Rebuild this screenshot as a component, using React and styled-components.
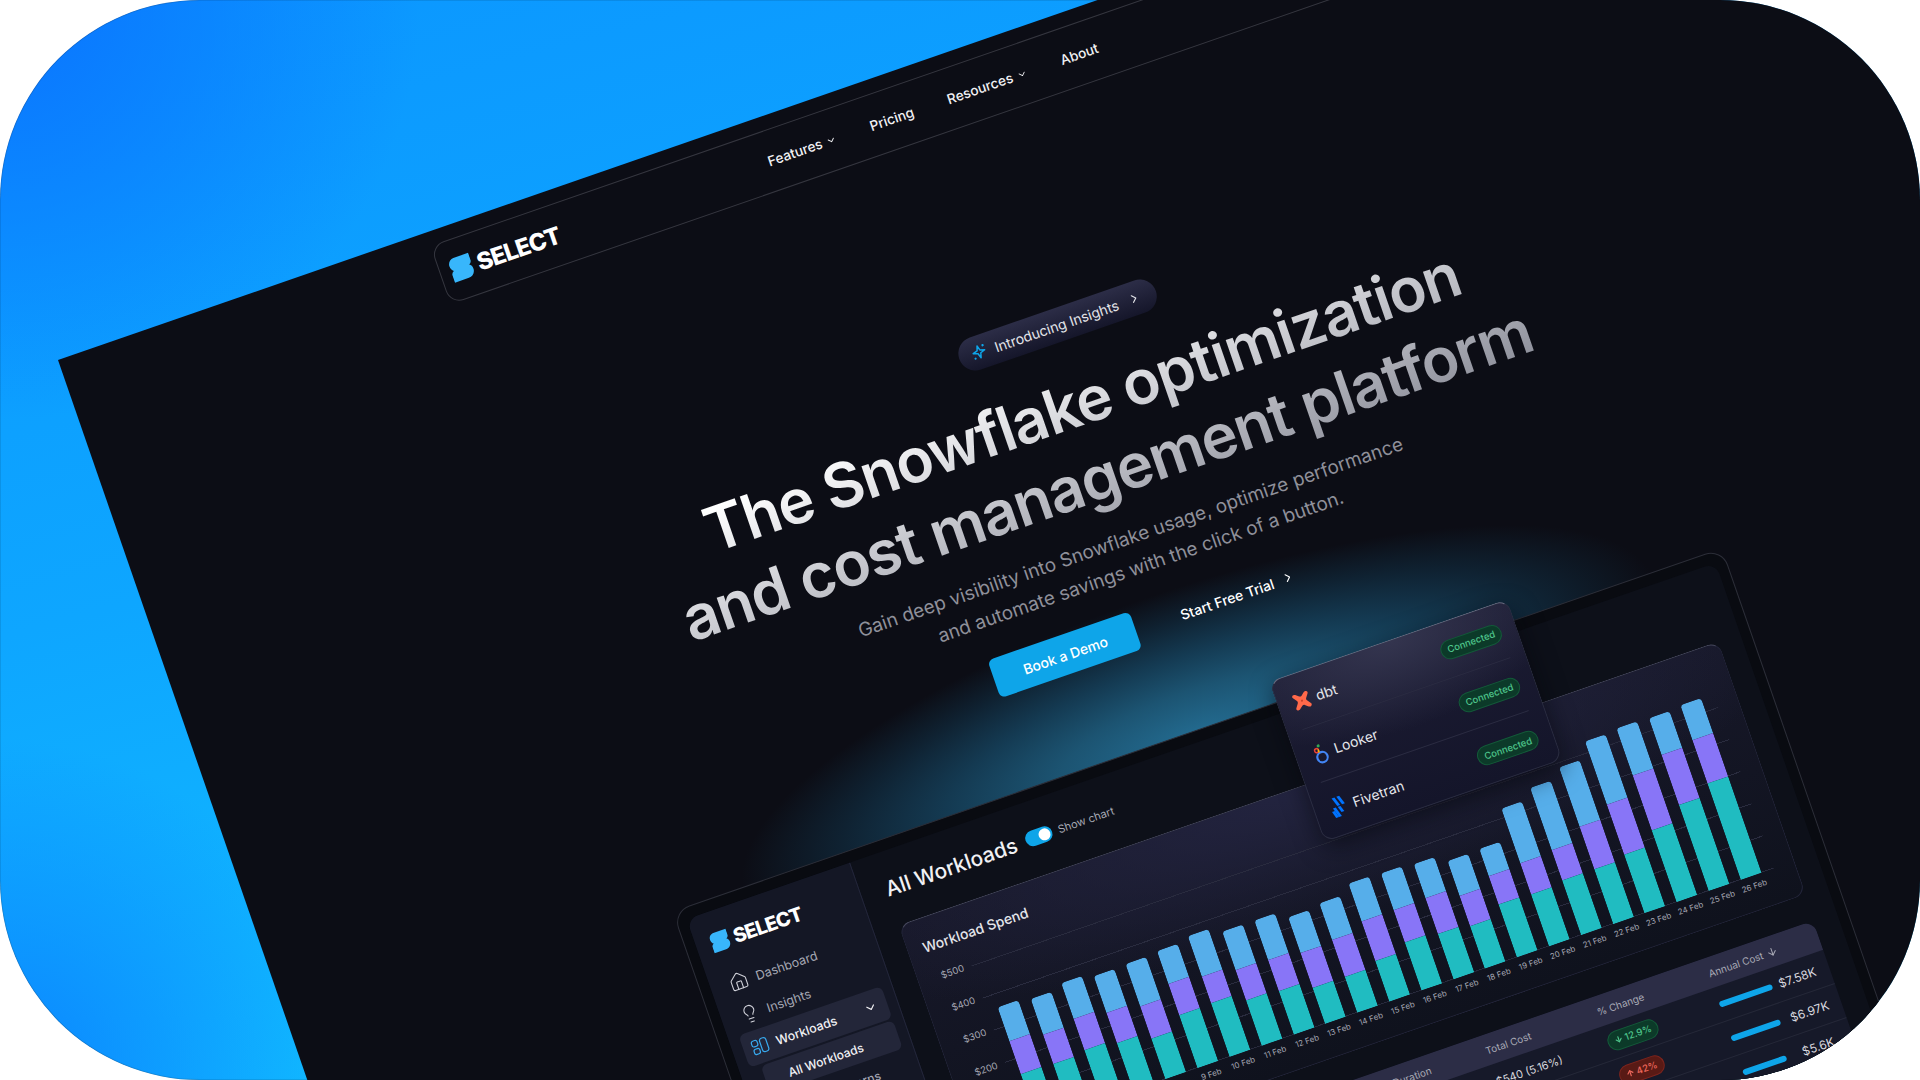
import React from "react";
import styled, { createGlobalStyle } from "styled-components";
import { ChevronDown, ChevronRight, House, Lightbulb, ArrowDown, ArrowUp } from "lucide-react";

const GlobalStyle = createGlobalStyle`
  html, body {
    margin: 0;
    background: #fff;
    font-family: Inter, "Noto Sans", sans-serif;
  }
  * { box-sizing: border-box; }
`;

const BARS = [
  [36, 35, 52], [38, 31, 51], [38, 33, 54], [39, 32, 50], [45, 34, 43], [35, 33, 56],
  [43, 28, 57], [41, 32, 48], [42, 33, 46], [38, 37, 38], [39, 39, 38], [40, 42, 43],
  [39, 34, 51], [36, 38, 48], [37, 32, 45], [29, 30, 56], [58, 33, 55], [66, 32, 58],
  [63, 45, 58], [67, 53, 62], [50, 58, 76], [39, 53, 91], [37, 46, 102],
];

const Logo = ({ size }) => (
  <LogoWrap $size={size}>
    <svg width={size} height={size * 1.12} viewBox="0 0 24 28">
      <path
        d="M7 1H24V9C24 11 23 12.5 21 13.5C23 14.5 24 16.5 24 19C24 23.5 20.5 27 16 27H0V19C0 17 1 15.5 3 14.5C1 13.5 0 11 0 8.5C0 4.5 3 1 7 1Z"
        fill="#38b6fb"
      />
    </svg>
    SELECT
  </LogoWrap>
);

const DbtIcon = () => (
  <svg width="18" height="18" viewBox="0 0 20 20">
    <path
      d="M2.2 1.2C3.2.6 4 1 5 1.6L8.6 4.6C9.6 5.2 10.4 5.2 11.4 4.6L15 1.6C16 1 16.8.6 17.8 1.2 19 2 19.4 3 18.6 4.2L15.4 8.6C14.8 9.6 14.8 10.4 15.4 11.4L18.6 15.8C19.4 17 19 18 17.8 18.8 16.8 19.4 16 19 15 18.4L11.4 15.4C10.4 14.8 9.6 14.8 8.6 15.4L5 18.4C4 19 3.2 19.4 2.2 18.8 1 18 .6 17 1.4 15.8L4.6 11.4C5.2 10.4 5.2 9.6 4.6 8.6L1.4 4.2C.6 3 1 2 2.2 1.2Z"
      fill="#ff694a"
    />
    <circle cx="10" cy="10" r="1.2" fill="#c8432c" />
  </svg>
);

const LookerIcon = () => (
  <svg width="18" height="22" viewBox="0 0 18 22">
    <circle cx="10" cy="15" r="5.2" fill="none" stroke="#4285f4" strokeWidth="2.2" />
    <circle cx="6.5" cy="7" r="2" fill="none" stroke="#ea4335" strokeWidth="1.5" />
    <circle cx="9.5" cy="3" r="1.5" fill="#34a853" />
    <path d="M8.3 6.5v3" stroke="#fbbc04" strokeWidth="1.5" />
  </svg>
);

const FivetranIcon = () => (
  <svg width="18" height="22" viewBox="0 0 18 22" fill="#0073ff">
    <path d="M5 1h3l3 9H8z" />
    <path d="M10 1h3l3 9h-3z" />
    <path d="M3 11h3l3 10H6z" />
    <path d="M8 11h3l2 6h-3z" />
    <path d="M1 14h3l2 7H3z" />
  </svg>
);

const SparkIcon = () => (
  <svg width="18" height="18" viewBox="0 0 18 18" fill="none" stroke="#0ea5e9" strokeWidth="1.5" strokeLinejoin="round">
    <path d="M9 2.5l1.4 4.6 4.6 1.4-4.6 1.6L9 15l-1.5-4.9-4.6-1.6 4.6-1.4z" />
    <circle cx="14.5" cy="3.5" r="1.2" fill="#0ea5e9" stroke="none" />
    <circle cx="3.5" cy="14" r="1.1" fill="#0ea5e9" stroke="none" />
  </svg>
);

const WorkloadIcon = () => (
  <svg width="18" height="18" viewBox="0 0 18 18" fill="none" stroke="#38a9ee" strokeWidth="1.2">
    <rect x="1.5" y="2" width="6" height="6" rx="2" />
    <rect x="1.5" y="10.5" width="6" height="5.5" rx="2" />
    <rect x="10" y="2" width="6.5" height="14" rx="2.5" />
  </svg>
);

const App = () => {
  return (
    <>
      <GlobalStyle />
      <Stage>
        <Page>
          <Nav>
            <Logo size={23} />
            <NavLinks>
              <NavLink>
                Features <ChevronDown size={11} />
              </NavLink>
              <NavLink>Pricing</NavLink>
              <NavLink>
                Resources <ChevronDown size={11} />
              </NavLink>
              <NavLink>About</NavLink>
            </NavLinks>
          </Nav>

          <Badge>
            <SparkIcon />
            Introducing Insights
            <ChevronRight size={14} />
          </Badge>
          <Title>
            The Snowflake optimization
            <br />
            and cost management platform
          </Title>
          <Subtitle>
            Gain deep visibility into Snowflake usage, optimize performance
            <br />
            and automate savings with the click of a button.
          </Subtitle>
          <Actions>
            <PrimaryButton>Book a Demo</PrimaryButton>
            <GhostButton>
              Start Free Trial <ChevronRight size={14} />
            </GhostButton>
          </Actions>

          <Frame>
            <Popover>
              <PopRow>
                <PopName>
                  <DbtIcon /> dbt
                </PopName>
                <Pill $tone="green">Connected</Pill>
              </PopRow>
              <PopRow>
                <PopName>
                  <LookerIcon /> Looker
                </PopName>
                <Pill $tone="green">Connected</Pill>
              </PopRow>
              <PopRow>
                <PopName>
                  <FivetranIcon /> Fivetran
                </PopName>
                <Pill $tone="green">Connected</Pill>
              </PopRow>
            </Popover>
            <Panel>
              <Sidebar>
                <SideLogo>
                  <Logo size={19} />
                </SideLogo>
                <SideItem>
                  <House size={20} strokeWidth={1.3} color="#d0d1d9" /> Dashboard
                </SideItem>
                <SideItem>
                  <Lightbulb size={20} strokeWidth={1.3} color="#d0d1d9" /> Insights
                </SideItem>
                <SideItem $active>
                  <WorkloadIcon /> Workloads
                  <ChevronDown size={14} />
                </SideItem>
                <SubItem $active>All Workloads</SubItem>
                <SubItem>Query Patterns</SubItem>
              </Sidebar>
              <Main>
                <Header>
                  <PageTitle>All Workloads</PageTitle>
                  <Toggle />
                  <ToggleLabel>Show chart</ToggleLabel>
                </Header>
                <ChartCard>
                  <CardTitle>Workload Spend</CardTitle>
                  <Chart>
                    <YAxis>
                      {["$500", "$400", "$300", "$200", "$100", "$0"].map((l) => (
                        <span key={l}>{l}</span>
                      ))}
                    </YAxis>
                    <div>
                      <Plot>
                        {BARS.map(([b, p, t], i) => (
                          <Bar key={i}>
                            <Segment $color="#56aeea" $h={b} />
                            <Segment $color="#8875f7" $h={p} />
                            <Segment $color="#20bcc1" $h={t} />
                          </Bar>
                        ))}
                      </Plot>
                      <XAxis>
                        {BARS.map((_, i) => (
                          <XLabel key={i}>{i + 4} Feb</XLabel>
                        ))}
                      </XAxis>
                    </div>
                  </Chart>
                </ChartCard>
                <Table>
                  <HeadRow>
                    <span>Workload</span>
                    <span>Duration</span>
                    <span>Total Cost</span>
                    <span>% Change</span>
                    <SortHead>
                      Annual Cost <ArrowDown size={12} />
                    </SortHead>
                  </HeadRow>
                  <Row>
                    <span />
                    <span />
                    <TotalCell>$540 (5.16%)</TotalCell>
                    <span>
                      <Pill $tone="green">
                        <ArrowDown size={9} strokeWidth={3} /> 12.9%
                      </Pill>
                    </span>
                    <Cost>
                      <CostTrack>
                        <CostBar $w={56} />
                      </CostTrack>
                      $7.58K
                    </Cost>
                  </Row>
                  <Row>
                    <span />
                    <span />
                    <span />
                    <span>
                      <Pill $tone="red">
                        <ArrowUp size={9} strokeWidth={3} /> 42%
                      </Pill>
                    </span>
                    <Cost>
                      <CostTrack>
                        <CostBar $w={52} />
                      </CostTrack>
                      $6.97K
                    </Cost>
                  </Row>
                  <Row>
                    <span />
                    <span />
                    <span />
                    <span />
                    <Cost>
                      <CostTrack>
                        <CostBar $w={46} />
                      </CostTrack>
                      $5.6K
                    </Cost>
                  </Row>
                </Table>
              </Main>
            </Panel>
          </Frame>
        </Page>
      </Stage>
    </>
  );
};

const Stage = styled.div`
  width: 1920px;
  height: 1080px;
  border-radius: 200px;
  overflow: hidden;
  box-shadow: inset 0 0 1px #000;
  background:
    radial-gradient(circle 420px at 0 0, #0a74ff 0%, rgba(10, 116, 255, 0) 100%),
    radial-gradient(circle 340px at 0 1080px, #0b84ff 0%, rgba(11, 132, 255, 0) 100%),
    linear-gradient(165deg, #0b96ff 0%, #0ea6ff 40%, #11bcff 75%);
`;

const Page = styled.div`
  width: 1911px;
  height: 1400px;
  padding-top: 14px;
  display: flex;
  flex-direction: column;
  align-items: center;
  transform-origin: 0 0;
  transform: translate(58px, 360px) rotate(-19.1deg);
  background:
    radial-gradient(ellipse 480px 145px at 955px 726px, #236b90 0%, #1c5472 30%, #143a52 55%, #0f2232 78%, rgba(12, 13, 21, 0) 100%),
    #0c0d15;
`;

const Nav = styled.nav`
  width: 1134px;
  height: 62px;
  flex: none;
  display: flex;
  align-items: center;
  padding-left: 10px;
  border: 1px solid #35363f;
  border-radius: 14px;
`;

const LogoWrap = styled.div`
  display: flex;
  align-items: center;
  gap: ${({ $size }) => $size * 0.25}px;
  color: #fff;
  font-size: ${({ $size }) => $size * 1.04}px;
  font-weight: 800;
  letter-spacing: -0.04em;
`;

const NavLinks = styled.div`
  display: flex;
  gap: 36px;
  margin-left: 221px;
`;

const NavLink = styled.a`
  display: flex;
  align-items: center;
  gap: 4px;
  color: #f1f1f4;
  font-size: 13.7px;
  font-weight: 500;
`;

const Badge = styled.div`
  width: 208px;
  height: 34px;
  flex: none;
  margin-top: 201px;
  display: flex;
  align-items: center;
  gap: 8px;
  padding: 0 12px;
  border-radius: 17px;
  background: linear-gradient(180deg, #2c2d47 0%, #15162a 100%);
  color: #e4e5ea;
  font-size: 14px;
  white-space: nowrap;

  svg:last-child {
    margin-left: 2px;
  }
`;

const Title = styled.h1`
  margin: 25px 0 0;
  padding-right: 4px;
  text-align: center;
  font-size: 61.7px;
  line-height: 77px;
  font-weight: 600;
  letter-spacing: -0.02em;
  white-space: nowrap;
  background: linear-gradient(172deg, #fff 10%, #c9cad0 50%, #8f919c 95%);
  -webkit-background-clip: text;
  background-clip: text;
  color: transparent;
`;

const Subtitle = styled.p`
  margin: 13px 0 0;
  text-align: center;
  font-size: 19px;
  line-height: 31px;
  color: #8f909a;
  white-space: nowrap;
`;

const Actions = styled.div`
  display: flex;
  gap: 23px;
  margin-top: 23px;
  padding-right: 9px;
`;

const PrimaryButton = styled.button`
  width: 150px;
  height: 40px;
  border: 0;
  border-radius: 6px;
  background: #0ea5e9;
  color: #fff;
  font: 500 14px Inter, sans-serif;
`;

const GhostButton = styled.button`
  height: 40px;
  padding: 0 24px;
  display: flex;
  align-items: center;
  gap: 8px;
  border: 0;
  background: transparent;
  color: #fff;
  font: 500 14px Inter, sans-serif;
`;

const Frame = styled.div`
  position: relative;
  width: 1111px;
  height: 660px;
  flex: none;
  margin-top: 94px;
  padding: 11px 10px 0;
  border: 1px solid #2c2e38;
  border-radius: 18px;
  background: #090b11;
`;

const Popover = styled.div`
  position: absolute;
  left: 638px;
  top: -23px;
  z-index: 2;
  width: 252px;
  padding: 0 15px;
  border: 1px solid #2a2c40;
  border-top-color: #66687c;
  border-radius: 12px;
  background:
    radial-gradient(ellipse 190px 90px at 50% 0, #34354f 0%, rgba(52, 53, 79, 0) 100%),
    linear-gradient(180deg, #1c1c33, #14152a);
  box-shadow: 0 8px 24px rgba(5, 6, 12, 0.6);
`;

const PopRow = styled.div`
  height: 56px;
  display: flex;
  align-items: center;
  justify-content: space-between;
  border-bottom: 1px solid #2b2c42;

  &:last-child {
    border-bottom: 0;
  }
`;

const PopName = styled.div`
  display: flex;
  align-items: center;
  gap: 6px;
  color: #e4e5ea;
  font-size: 14px;
`;

const Pill = styled.span`
  display: inline-flex;
  align-items: center;
  gap: 2px;
  height: 20px;
  padding: 0 6px;
  border-radius: 10px;
  border: 1px solid ${({ $tone }) => ($tone === "red" ? "#7d241d" : "#135a39")};
  background: ${({ $tone }) => ($tone === "red" ? "#591a15" : "#0c3a29")};
  color: ${({ $tone }) => ($tone === "red" ? "#f0685c" : "#4ec58c")};
  font-size: 9.5px;
  font-weight: 500;
`;

const Panel = styled.div`
  display: grid;
  grid-template-columns: 173px 1fr;
  height: 100%;
  border-radius: 12px 12px 0 0;
  overflow: hidden;
  background: #0d1019;
`;

const Sidebar = styled.aside`
  padding: 20px 10px 0 11px;
  background: #141725;
  border-right: 1px solid #23263a;
`;

const SideLogo = styled.div`
  height: 26px;
  margin-bottom: 13px;
  padding-left: 4px;
`;

const SideItem = styled.div`
  height: 34px;
  display: flex;
  align-items: center;
  gap: 8px;
  padding: 0 10px 0 8px;
  border-radius: 6px;
  background: ${({ $active }) => ($active ? "#232639" : "transparent")};
  color: ${({ $active }) => ($active ? "#f1f1f4" : "#a6a8b4")};
  font-size: 12.5px;
  font-weight: ${({ $active }) => ($active ? 500 : 400)};

  svg:last-child:not(:first-child) {
    margin-left: auto;
  }
`;

const SubItem = styled.div`
  height: 30px;
  margin: 2px 0 0 11px;
  padding-left: 24px;
  display: flex;
  align-items: center;
  border-radius: 6px;
  background: ${({ $active }) => ($active ? "#232639" : "transparent")};
  color: ${({ $active }) => ($active ? "#f1f1f4" : "#a6a8b4")};
  font-size: 12px;
  font-weight: 500;
`;

const Main = styled.main`
  padding: 25px 23px 0 25px;
`;

const Header = styled.div`
  height: 24px;
  display: flex;
  align-items: center;
  margin-bottom: 26px;
`;

const PageTitle = styled.h2`
  margin: 0;
  color: #f1f1f4;
  font-size: 21px;
  font-weight: 500;
`;

const Toggle = styled.div`
  position: relative;
  width: 28px;
  height: 16px;
  margin-left: 10px;
  border-radius: 8px;
  background: #0ea5e9;

  &::after {
    content: "";
    position: absolute;
    top: 2px;
    right: 2px;
    width: 12px;
    height: 12px;
    border-radius: 50%;
    background: #fff;
  }
`;

const ToggleLabel = styled.span`
  margin-left: 6px;
  color: #a6a8b4;
  font-size: 11px;
`;

const ChartCard = styled.section`
  height: 268px;
  padding: 20px 21px 0 15px;
  border: 1px solid #23253a;
  border-top-color: #45475c;
  border-radius: 12px;
  background:
    radial-gradient(ellipse 520px 140px at 50% 0, #232440 0%, rgba(35, 36, 64, 0) 100%),
    linear-gradient(180deg, #171829, #0f121d);
`;

const CardTitle = styled.h3`
  margin: 0 0 24px;
  height: 17px;
  color: #e4e5ea;
  font-size: 14px;
  font-weight: 500;
  line-height: 17px;
`;

const Chart = styled.div`
  display: grid;
  grid-template-columns: 32px 1fr;
  column-gap: 8px;
`;

const YAxis = styled.div`
  height: 183px;
  margin-top: -6px;
  display: flex;
  flex-direction: column;
  justify-content: space-between;
  align-items: flex-end;
  color: #a6a8b4;
  font-size: 9.5px;
  line-height: 12px;
`;

const Plot = styled.div`
  height: 171px;
  display: flex;
  align-items: flex-end;
  justify-content: space-between;
  padding: 0 13px 0 11px;
  background-image: repeating-linear-gradient(to bottom, #2a2c3f 0, #2a2c3f 1px, transparent 1px, transparent 34px);
`;

const Bar = styled.div`
  width: 22px;
  flex: none;
  display: flex;
  flex-direction: column;
  border-radius: 4px 4px 0 0;
  overflow: hidden;
`;

const Segment = styled.div`
  height: ${({ $h }) => $h}px;
  background: ${({ $color }) => $color};
`;

const XAxis = styled.div`
  display: flex;
  justify-content: space-between;
  margin-top: 4px;
  padding: 0 13px 0 11px;
`;

const XLabel = styled.span`
  width: 22px;
  display: flex;
  justify-content: center;
  color: #a6a8b4;
  font-size: 8px;
  line-height: 12px;
  white-space: nowrap;
`;

const Table = styled.section`
  margin-top: 27px;
  margin-right: 2px;
  border-radius: 12px 12px 0 0;
  overflow: hidden;
  background: #161929;
`;

const HeadRow = styled.div`
  height: 31px;
  display: grid;
  grid-template-columns: 416px 98px 118px 118px 1fr;
  align-items: center;
  background: #2c2d46;
  color: #a8a9b5;
  font-size: 10px;
`;

const SortHead = styled.span`
  display: flex;
  align-items: center;
  gap: 4px;
`;

const Row = styled.div`
  height: 36px;
  display: grid;
  grid-template-columns: 416px 98px 118px 118px 1fr;
  align-items: center;
  border-bottom: 1px solid #252838;
  color: #d6d7de;
  font-size: 12px;
`;

const TotalCell = styled.span`
  font-size: 11px;
`;

const Cost = styled.div`
  display: flex;
  align-items: center;
`;

const CostTrack = styled.div`
  width: 63px;
`;

const CostBar = styled.div`
  width: ${({ $w }) => $w}px;
  height: 6px;
  border-radius: 3px;
  background: #0ea5e9;
`;

export default App;
